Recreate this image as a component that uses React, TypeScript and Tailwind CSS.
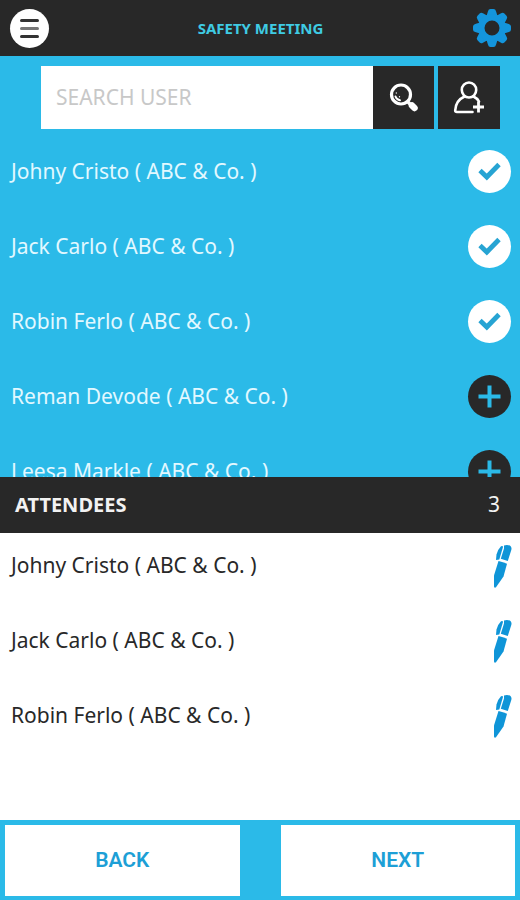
import { useState } from "react";

const users = ["Johny Cristo", "Jack Carlo", "Robin Ferlo", "Reman Devode", "Leesa Markle"];
const company = "( ABC & Co. )";

function GearIcon() {
  const teeth = [0, 45, 90, 135, 180, 225, 270, 315];

  return (
    <svg viewBox="0 0 40 40" className="size-10" fill="#1495dc" aria-hidden="true">
      {teeth.map((angle) => (
        <path
          key={angle}
          d="M14.5 8 L16 3.2 Q16.5 1 18.5 1 H21.5 Q23.5 1 24 3.2 L25.5 8 Z"
          transform={`rotate(${angle} 20 20)`}
        />
      ))}
      <path
        fillRule="evenodd"
        d="M20 6.3a13.7 13.7 0 1 0 0 27.4a13.7 13.7 0 1 0 0-27.4z M20 12.5a7.5 7.5 0 1 1 0 15a7.5 7.5 0 1 1 0-15z"
      />
    </svg>
  );
}

function SearchIcon() {
  return (
    <svg viewBox="0 0 32 32" className="size-8" fill="none" stroke="#fff" strokeLinecap="round" aria-hidden="true">
      <circle cx="13" cy="12.5" r="9.5" strokeWidth="3.2" />
      <path d="M7.5 14.5a6 6 0 0 0 4.5 3.8" strokeWidth="2" />
      <path d="M8.3 11v.1M11.5 14.7v.1" strokeWidth="1.3" />
      <path d="M20.5 20.500l3 3" strokeWidth="3.500" />
      <path d="M24 23.500l2.500 2.500" strokeWidth="6.500" />
    </svg>
  );
}

function AddUserIcon() {
  return (
    <svg viewBox="0 0 34 36" className="h-9 w-8.5" fill="none" stroke="#fff" strokeWidth="2.6" aria-hidden="true">
      <ellipse cx="17" cy="10" rx="7.2" ry="7.5" />
      <path d="M12.5 16.5C7 19 3.5 23 3.2 30.5Q3.2 32 5 32H20.5" strokeLinecap="round" />
      <path d="M21.5 16.5C24 17.7 26 19.5 27 21.5" strokeLinecap="round" />
      <path d="M26.5 21.5v11M21 27h11" strokeWidth="2.8" />
    </svg>
  );
}

function PenIcon() {
  return (
    <svg viewBox="0 0 20 44" className="h-11 w-5" fill="#0f95d8" aria-hidden="true">
      <path d="M12 1.500Q15.500 .2 18.500 2Q20 3.500 19.300 6L15.800 17L8.800 14.800L12 4.500Z" />
      <path d="M9 2.200Q11 1.500 11 3L7.300 15.500L4 16L4.500 10.500Q6 5 9 2.200Z" />
      <path d="M6.500 17Q11 18.300 15 19.700L11.500 32.500L4 43.300Q2.500 44.500 2 42.500L2 31.500Z" />
    </svg>
  );
}

function CheckIcon() {
  return (
    <svg viewBox="0 0 43 43" className="size-full" fill="none" aria-hidden="true">
      <path d="M12 20.5l6.8 6.5L31 14.5" stroke="#27a4d3" strokeWidth="4.8" />
    </svg>
  );
}

function PlusIcon() {
  return (
    <svg viewBox="0 0 43 43" className="size-full" fill="none" aria-hidden="true">
      <path d="M21.5 10.5v22M10.5 21.5h22" stroke="#2bbae8" strokeWidth="4" />
    </svg>
  );
}

export default function App() {
  const [query, setQuery] = useState("");
  const [selected, setSelected] = useState(users.slice(0, 3));

  const toggleUser = (name: string) => {
    setSelected((prev) => (prev.includes(name) ? prev.filter((n) => n !== name) : [...prev, name]));
  };

  const visibleUsers = users.filter((name) => name.toLowerCase().includes(query.toLowerCase()));

  return (
    <div className="flex h-screen flex-col bg-white font-['Noto_Sans',sans-serif]">
      {/* Header */}
      <header className="flex h-14 shrink-0 items-center justify-between bg-[#282828] pl-2.5 pr-2">
        <button
          aria-label="Menu"
          className="flex size-[39px] flex-col items-center justify-center gap-[5px] rounded-full bg-white"
        >
          <span className="h-[3px] w-[19px] rounded-sm bg-[#333333]" />
          <span className="h-[3px] w-[19px] rounded-sm bg-[#777777]" />
          <span className="h-[3px] w-[19px] rounded-sm bg-[#333333]" />
        </button>
        <h1 className="text-[15px] font-bold text-[#3fcbe3]">SAFETY MEETING</h1>
        <button aria-label="Settings">
          <GearIcon />
        </button>
      </header>

      {/* User picker */}
      <section className="flex min-h-0 flex-[411] flex-col bg-[#2bbae8] pt-2.5">
        <form className="flex h-[63px] shrink-0 pl-[41px] pr-5" onSubmit={(e) => e.preventDefault()}>
          <input
            type="text"
            aria-label="Search user"
            placeholder="SEARCH USER"
            value={query}
            onChange={(e) => setQuery(e.target.value)}
            className="min-w-0 flex-1 bg-white px-[15px] text-[21px] text-[#282828] outline-none placeholder:text-[#c8c8c8]"
          />
          <button aria-label="Search" className="flex w-[61px] items-center justify-center bg-[#282828]">
            <SearchIcon />
          </button>
          <button
            type="button"
            aria-label="Add user"
            className="ml-1 flex w-[62px] items-center justify-center bg-[#282828]"
          >
            <AddUserIcon />
          </button>
        </form>

        <ul className="mt-[21px] flex min-h-0 flex-1 flex-col gap-8 overflow-y-auto pl-[11px] pr-[9px] [scrollbar-width:none]">
          {visibleUsers.map((name) => {
            const isSelected = selected.includes(name);
            return (
              <li key={name} className="flex h-[43px] shrink-0 items-center justify-between">
                <span className="text-[21px] text-[#e2f8ff]">
                  {name} {company}
                </span>
                <button
                  aria-label={isSelected ? `Remove ${name}` : `Add ${name}`}
                  onClick={() => toggleUser(name)}
                  className={`size-[43px] rounded-full ${isSelected ? "bg-white" : "bg-[#282828]"}`}
                >
                  {isSelected ? <CheckIcon /> : <PlusIcon />}
                </button>
              </li>
            );
          })}
        </ul>
      </section>

      {/* Attendees */}
      <div className="flex h-14 shrink-0 items-center justify-between bg-[#282828] pl-[15px] pr-5 text-[#f2f2f2]">
        <h2 className="text-xl font-bold">ATTENDEES</h2>
        <span className="text-[21px]">{selected.length}</span>
      </div>
      <ul className="flex min-h-0 flex-[276] flex-col gap-8 overflow-y-auto pl-[11px] pr-2 pt-[11px] [scrollbar-width:none]">
        {selected.map((name) => (
          <li key={name} className="flex h-[43px] shrink-0 items-center justify-between">
            <span className="text-[21px] text-[#282828]">
              {name} {company}
            </span>
            <button aria-label={`Sign for ${name}`}>
              <PenIcon />
            </button>
          </li>
        ))}
      </ul>

      {/* Footer */}
      <footer className="flex h-20 shrink-0 gap-[41px] bg-[#2bbae8] px-[5px] pb-1 pt-[5px] font-[Roboto,sans-serif] text-[21px] font-semibold text-[#1d9fd6]">
        <button className="flex-1 bg-white">BACK</button>
        <button className="flex-1 bg-white">NEXT</button>
      </footer>
    </div>
  );
}
